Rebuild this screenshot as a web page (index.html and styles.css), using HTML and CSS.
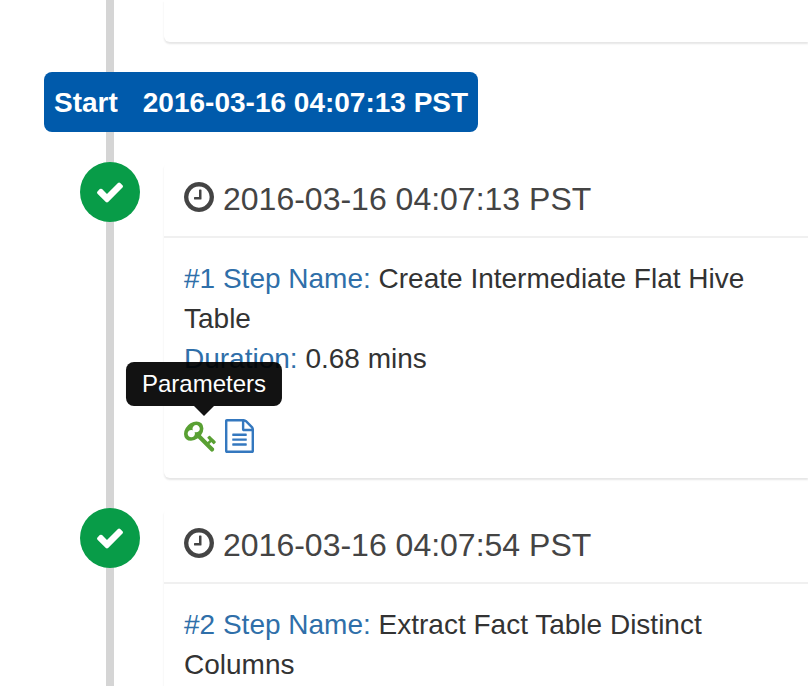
FILE: index.html
```
<!DOCTYPE html>
<html lang="en">
<head>
<meta charset="utf-8">
<title>Job steps</title>
<link rel="stylesheet" href="styles.css">
</head>
<body>
<svg class="sprite" aria-hidden="true">
  <symbol id="check" viewBox="0 0 1792 1792"><path d="M1671 566q0 40-28 68l-724 724-136 136q-28 28-68 28t-68-28l-136-136-362-362q-28-28-28-68t28-68l136-136q28-28 68-28t68 28l294 295 656-657q28-28 68-28t68 28l136 136q28 28 28 68z"/></symbol>
  <symbol id="clock" viewBox="0 128 1536 1536"><path d="M896 544v448q0 14-9 23t-23 9h-320q-14 0-23-9t-9-23v-64q0-14 9-23t23-9h224v-352q0-14 9-23t23-9h64q14 0 23 9t9 23zm416 352q0-148-73-273t-198-198-273-73-273 73-198 198-73 273 73 273 198 198 273 73 273-73 198-198 73-273zm224 0q0 209-103 385.5t-279.5 279.5-385.5 103-385.5-103-279.5-279.5-103-385.5 103-385.5 279.5-279.5 385.5-103 385.5 103 279.5 279.5 103 385.5z"/></symbol>
  <symbol id="key" viewBox="0 0 1792 1792"><path d="M832 512q0-80-56-136t-136-56-136 56-56 136q0 42 19 83-41-19-83-19-80 0-136 56t-56 136 56 136 136 56 136-56 56-136q0-42-19-83 41 19 83 19 80 0 136-56t56-136zm851 704q0 17-49 66t-66 49q-9 0-28.5-16t-36.5-33-38.5-40-24.5-26l-96 96 220 220q28 28 28 68 0 42-39 81t-81 39q-40 0-68-28l-671-671q-176 131-365 131-163 0-265.5-102.5t-102.5-265.5q0-160 95-313t248-248 313-95q163 0 265.5 102.5t102.5 265.5q0 189-131 365l355 355 96-96q-3-3-26-24.5t-40-38.5-33-36.5-16-28.5q0-17 49-66t66-49q13 0 23 10 6 6 46 44.5t82 79.5 86.5 86 73 78 28.5 41z"/></symbol>
  <symbol id="file" viewBox="0 0 1536 1792"><path d="M1468 380q28 28 48 76t20 88v1152q0 40-28 68t-68 28h-1344q-40 0-68-28t-28-68v-1600q0-40 28-68t68-28h896q40 0 88 20t76 48zm-444-244v376h376q-10-29-22-41l-313-313q-12-12-41-22zm384 1528v-1024h-416q-40 0-68-28t-28-68v-416h-768v1536h1280zm-1024-864q0-14 9-23t23-9h704q14 0 23 9t9 23v64q0 14-9 23t-23 9h-704q-14 0-23-9t-9-23v-64zm736 224q14 0 23 9t9 23v64q0 14-9 23t-23 9h-704q-14 0-23-9t-9-23v-64q0-14 9-23t23-9h704zm0 256q14 0 23 9t9 23v64q0 14-9 23t-23 9h-704q-14 0-23-9t-9-23v-64q0-14 9-23t23-9h704z"/></symbol>
</svg>
<main class="timeline">
  <div class="card card-tail"></div>
  <div class="time-label"><span>Start</span><time>2016-03-16 04:07:13 PST</time></div>
  <section class="step">
    <span class="status"><svg class="icon"><use href="#check"/></svg></span>
    <article class="card">
      <h2 class="card-header"><svg class="icon"><use href="#clock"/></svg><time>2016-03-16 04:07:13 PST</time></h2>
      <div class="card-body">
        <div><span class="label">#1 Step Name:</span> Create Intermediate Flat Hive Table</div>
        <div><span class="label">Duration:</span> 0.68 mins</div>
      </div>
      <div class="card-footer">
        <a class="action action-key" href="#" aria-describedby="tip"><svg class="icon-key"><use href="#key"/></svg><span class="tooltip" id="tip" role="tooltip">Parameters</span></a>
        <a class="action action-log" href="#" aria-label="Log"><svg class="icon-file"><use href="#file"/></svg></a>
      </div>
    </article>
  </section>
  <section class="step">
    <span class="status"><svg class="icon"><use href="#check"/></svg></span>
    <article class="card">
      <h2 class="card-header"><svg class="icon"><use href="#clock"/></svg><time>2016-03-16 04:07:54 PST</time></h2>
      <div class="card-body">
        <div><span class="label">#2 Step Name:</span> Extract Fact Table Distinct Columns</div>
      </div>
    </article>
  </section>
</main>
</body>
</html>
```
FILE: styles.css
```
* { box-sizing: border-box; }
body {
  margin: 0;
  height: 100vh;
  overflow: hidden;
  background: #fff;
  color: #333;
  font: 28px/40px "Liberation Sans", Arial, sans-serif;
}
svg { display: block; fill: currentColor; }
.sprite { position: absolute; width: 0; height: 0; }
.icon { width: 30px; height: 30px; flex: none; }

.timeline {
  display: flex;
  flex-direction: column;
  align-items: stretch;
  gap: 30px;
  min-height: 100vh;
  padding-left: 44px;
  background: linear-gradient(#d5d5d5, #d5d5d5) 106px 0 / 8px 100% no-repeat;
}
.card {
  flex: 1;
  min-width: 0;
  background: #fff;
  border-radius: 6px 0 0 6px;
  box-shadow: 0 2px 2px rgba(0, 0, 0, .1);
}
.card-tail { flex: none; height: 42px; margin-left: 120px; border-top-left-radius: 0; }
.time-label {
  align-self: flex-start;
  display: flex;
  gap: 25px;
  padding: 11px 10px 9px;
  border-radius: 8px;
  background: #005aab;
  color: #fff;
  font-weight: bold;
}
.step {
  display: flex;
  align-items: flex-start;
  gap: 24px;
  padding-left: 36px;
}
.status {
  display: flex;
  flex: none;
  align-items: center;
  justify-content: center;
  width: 60px;
  height: 60px;
  border-radius: 50%;
  background: #089c48;
  color: #fff;
}
.card-header {
  display: flex;
  align-items: center;
  gap: 9px;
  margin: 0;
  padding: 19px 20px;
  border-bottom: 2px solid #f0f0f0;
  color: #444;
  font-size: 32px;
  font-weight: normal;
  line-height: 36px;
}
.card-header .icon { margin-bottom: 4px; }
.card-body { padding: 21px 20px 39px; }
.label { color: #2f6fa9; }
.card-footer { display: flex; gap: 1px; padding: 0 20px 20px; }
.action {
  position: relative;
  display: flex;
  align-items: center;
  height: 40px;
  padding-bottom: 4px;
}
.action-key { padding-right: 6px; color: #59a033; }
.action-log { color: #3478bf; }
.icon-key { width: 34px; height: 34px; }
.icon-file { width: 29px; height: 34px; }
.tooltip {
  position: absolute;
  bottom: calc(100% + 12px);
  left: 50%;
  transform: translateX(-50%);
  padding: 6px 16px;
  border-radius: 8px;
  background: rgba(0, 0, 0, .93);
  color: #fff;
  font-size: 24px;
  line-height: 32px;
}
.tooltip::after {
  content: "";
  position: absolute;
  top: 100%;
  left: 50%;
  margin-left: -10px;
  border: 10px solid transparent;
  border-top-color: rgba(0, 0, 0, .93);
  border-bottom: 0;
}
```
